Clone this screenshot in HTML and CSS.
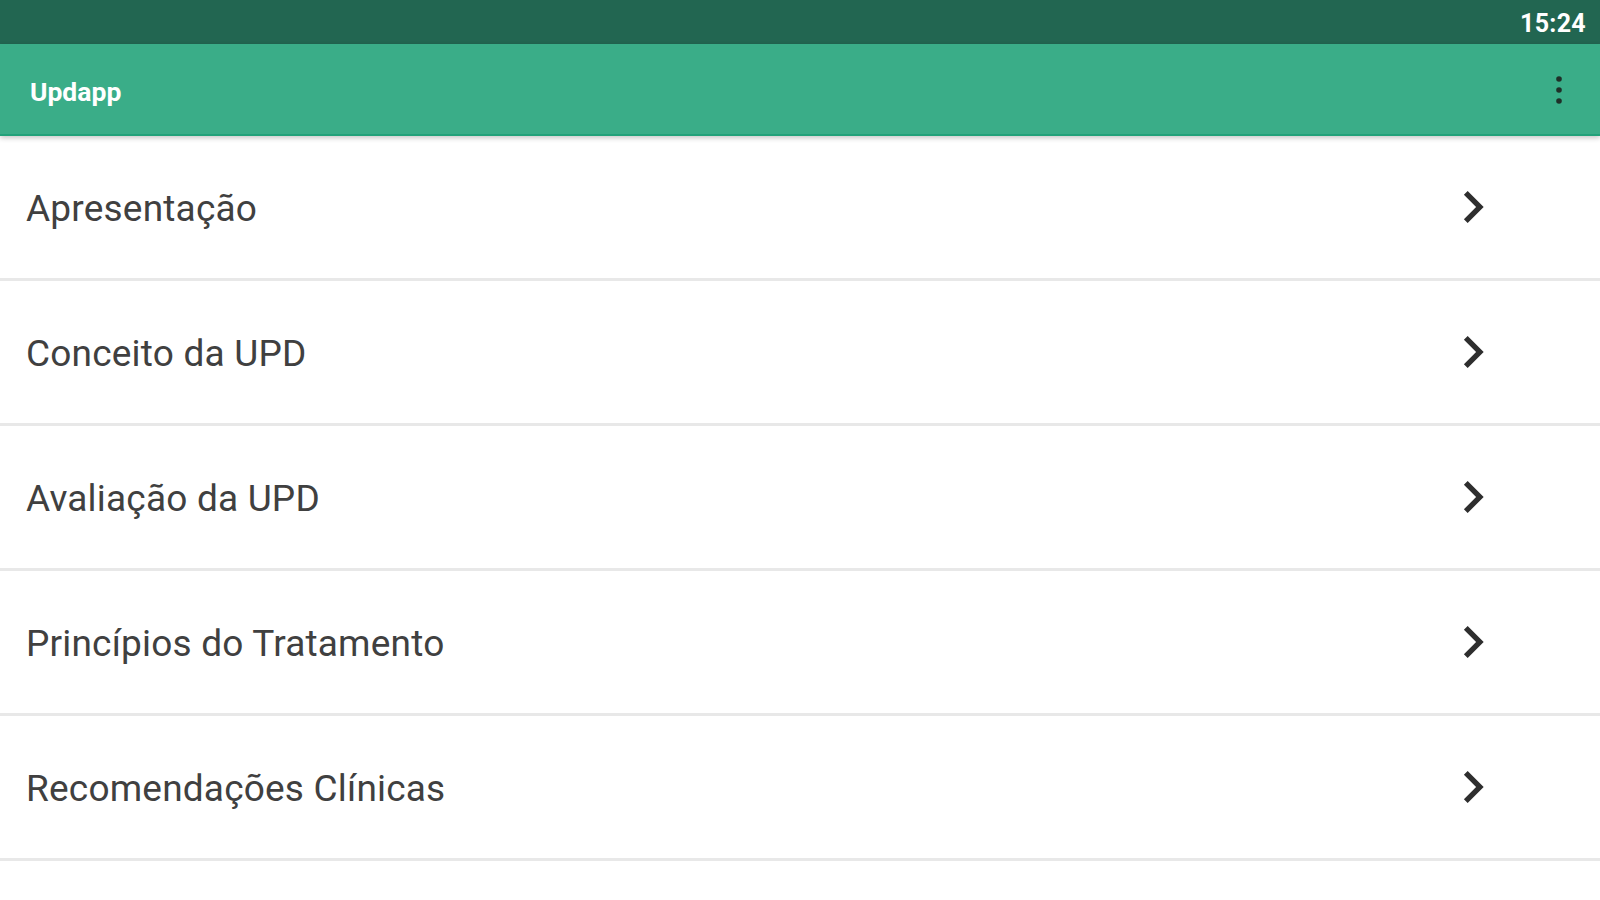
FILE: index.html
```html
<!DOCTYPE html>
<html lang="pt">
<head>
<meta charset="utf-8">
<title>Updapp</title>
<link rel="stylesheet" href="styles.css">
</head>
<body>
<div class="statusbar"><span class="time">15:24</span></div>
<header class="toolbar">
  <span class="title">Updapp</span>
  <svg class="kebab" width="10" height="34" viewBox="0 0 10 34"><circle cx="5" cy="5" r="2.8"/><circle cx="5" cy="16" r="2.8"/><circle cx="5" cy="27" r="2.8"/></svg>
</header>
<ul class="menu">
  <li class="item"><span class="label">Apresentação</span><svg class="chev" viewBox="0 0 24 24"><path d="M10 6L8.59 7.41 13.17 12l-4.58 4.59L10 18l6-6z"/></svg></li>
  <li class="item"><span class="label">Conceito da UPD</span><svg class="chev" viewBox="0 0 24 24"><path d="M10 6L8.59 7.41 13.17 12l-4.58 4.59L10 18l6-6z"/></svg></li>
  <li class="item"><span class="label">Avaliação da UPD</span><svg class="chev" viewBox="0 0 24 24"><path d="M10 6L8.59 7.41 13.17 12l-4.58 4.59L10 18l6-6z"/></svg></li>
  <li class="item"><span class="label">Princípios do Tratamento</span><svg class="chev" viewBox="0 0 24 24"><path d="M10 6L8.59 7.41 13.17 12l-4.58 4.59L10 18l6-6z"/></svg></li>
  <li class="item"><span class="label">Recomendações Clínicas</span><svg class="chev" viewBox="0 0 24 24"><path d="M10 6L8.59 7.41 13.17 12l-4.58 4.59L10 18l6-6z"/></svg></li>
</ul>
</body>
</html>
```
FILE: styles.css
```css
* { box-sizing: border-box; }
html, body {
  margin: 0;
  padding: 0;
  width: 1600px;
  height: 900px;
  overflow: hidden;
  background: #ffffff;
  font-family: Roboto, "Liberation Sans", sans-serif;
}
.statusbar {
  height: 44px;
  background: #226651;
  display: flex;
  justify-content: flex-end;
  align-items: center;
  padding-right: 14px;
}
.time {
  color: #ffffff;
  font-weight: 700;
  font-size: 25px;
  letter-spacing: 0.3px;
  margin-top: 3px;
}
.toolbar {
  height: 92px;
  background: #3aad88;
  border-bottom: 2px solid #22a27a;
  box-shadow: 0 2px 5px rgba(0,0,0,0.22);
  display: flex;
  align-items: center;
  justify-content: space-between;
  padding: 0 36px 0 30px;
  position: relative;
  z-index: 1;
}
.title {
  color: #ffffff;
  font-weight: 700;
  font-size: 26.5px;
  margin-top: 4px;
}
.kebab { fill: #1f2f28; margin-top: 4px; }
.menu {
  list-style: none;
  margin: 0;
  padding: 0;
}
.item {
  height: 145px;
  border-bottom: 3px solid #e8e8e8;
  display: flex;
  align-items: center;
  justify-content: space-between;
  padding-left: 26px;
}
.label {
  font-size: 37px;
  color: #404040;
  letter-spacing: 0.2px;
  margin-top: 2px;
}
.chev {
  width: 64px;
  height: 64px;
  fill: #2e2e2e;
  margin-right: 95px;
}
```
